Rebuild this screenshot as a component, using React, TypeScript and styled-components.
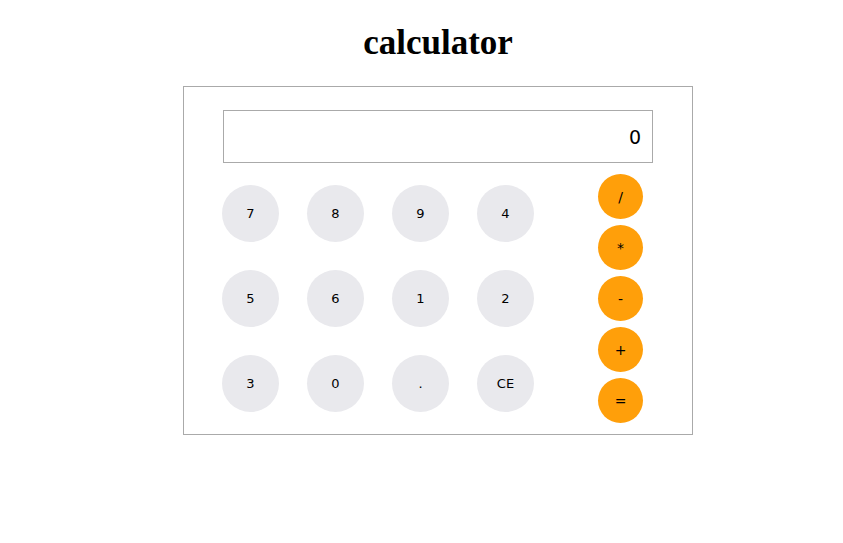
import styled, { createGlobalStyle } from "styled-components";

const GlobalStyle = createGlobalStyle`
  body {
    margin: 8px;
    font-family: "Liberation Serif", serif;
    background: #fff;
  }
`;

const DIGITS = ["7", "8", "9", "4", "5", "6", "1", "2", "3", "0", ".", "CE"];
const OPERATORS = ["/", "*", "-", "+", "="];

const App = () => {
  return (
    <Page>
      <GlobalStyle />
      <Title>calculator</Title>
      <Calculator>
        <Display>0</Display>
        <Body>
          <Keypad>
            {DIGITS.map((d) => (
              <Key key={d}>{d}</Key>
            ))}
          </Keypad>
          <Operators>
            {OPERATORS.map((op) => (
              <OpKey key={op}>{op}</OpKey>
            ))}
          </Operators>
        </Body>
      </Calculator>
    </Page>
  );
};

export default App;

const Page = styled.div`
  padding-left: 33px;
`;

const Title = styled.h1`
  font-family: "Liberation Serif", "Times New Roman", serif;
  font-size: 35px;
  line-height: 39px;
  font-weight: bold;
  text-align: center;
  margin: 15px 0 24px;
`;

const Calculator = styled.div`
  box-sizing: border-box;
  width: 510px;
  height: 349px;
  margin: 0 auto;
  border: 1px solid #aaaaaa;
  padding: 23px 39px 10px 39px;
`;

const Display = styled.div`
  box-sizing: border-box;
  width: 430px;
  height: 53px;
  border: 1px solid #aaaaaa;
  display: flex;
  align-items: center;
  justify-content: flex-end;
  padding-right: 11px;
  font-family: "DejaVu Sans", Verdana, sans-serif;
  font-size: 19px;
  color: #000;
`;

const Body = styled.div`
  display: flex;
  justify-content: space-between;
  margin-top: 11px;
  width: 430px;
`;

const Keypad = styled.div`
  display: grid;
  grid-template-columns: repeat(4, 57px);
  grid-auto-rows: 57px;
  column-gap: 28px;
  row-gap: 28px;
  margin-top: 11px;
  margin-left: -1px;
`;

const Key = styled.button`
  width: 57px;
  height: 57px;
  border: none;
  border-radius: 50%;
  background: #e9e9ed;
  color: #000;
  font-family: "DejaVu Sans", Verdana, sans-serif;
  font-size: 13px;
  padding: 0;
  cursor: pointer;
`;

const Operators = styled.div`
  display: flex;
  flex-direction: column;
  gap: 6px;
  margin-right: 10px;
`;

const OpKey = styled(Key)`
  width: 45px;
  height: 45px;
  background: #ff9f0a;
  font-size: 14px;
`;
